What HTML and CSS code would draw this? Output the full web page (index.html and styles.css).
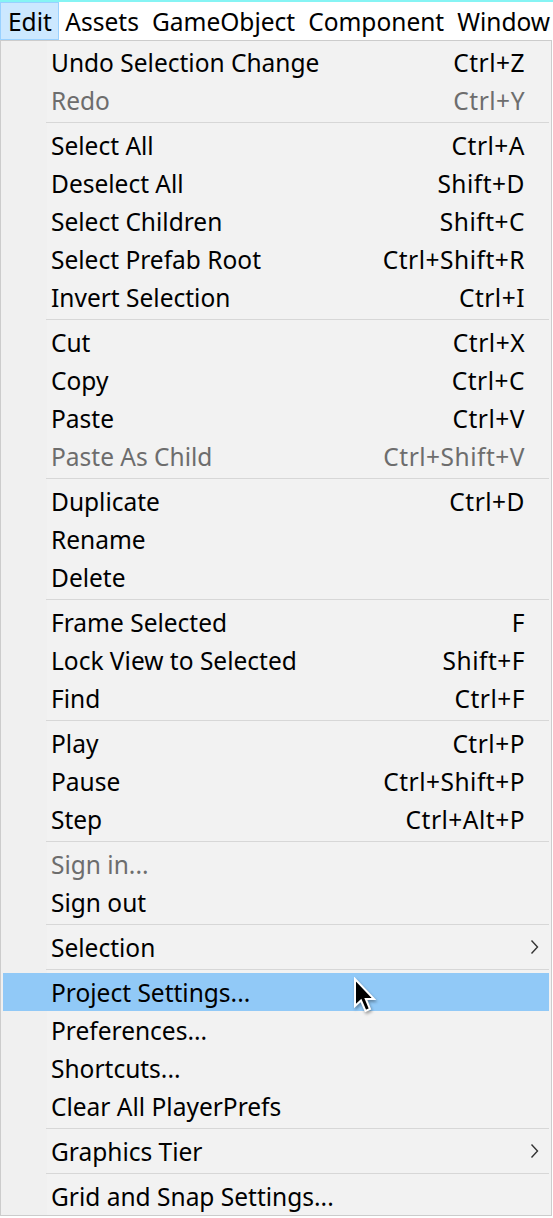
FILE: index.html
```html
<!DOCTYPE html>
<html>
<head>
<meta charset="utf-8">
<link rel="stylesheet" href="styles.css">
</head>
<body>
<div class="topline"></div>
<div class="menubar">
  <span class="mb-item mb-active">Edit</span>
  <span class="mb-item">Assets</span>
  <span class="mb-item">GameObject</span>
  <span class="mb-item">Component</span>
  <span class="mb-item">Window</span>
</div>
<div class="menu">
  <div class="row"><span class="label">Undo Selection Change</span><span class="key">Ctrl+Z</span><span class="arrow"></span></div>
  <div class="row disabled"><span class="label">Redo</span><span class="key">Ctrl+Y</span><span class="arrow"></span></div>
  <div class="sep"></div>
  <div class="row"><span class="label">Select All</span><span class="key">Ctrl+A</span><span class="arrow"></span></div>
  <div class="row"><span class="label">Deselect All</span><span class="key">Shift+D</span><span class="arrow"></span></div>
  <div class="row"><span class="label">Select Children</span><span class="key">Shift+C</span><span class="arrow"></span></div>
  <div class="row"><span class="label">Select Prefab Root</span><span class="key">Ctrl+Shift+R</span><span class="arrow"></span></div>
  <div class="row"><span class="label">Invert Selection</span><span class="key">Ctrl+I</span><span class="arrow"></span></div>
  <div class="sep"></div>
  <div class="row"><span class="label">Cut</span><span class="key">Ctrl+X</span><span class="arrow"></span></div>
  <div class="row"><span class="label">Copy</span><span class="key">Ctrl+C</span><span class="arrow"></span></div>
  <div class="row"><span class="label">Paste</span><span class="key">Ctrl+V</span><span class="arrow"></span></div>
  <div class="row disabled"><span class="label">Paste As Child</span><span class="key">Ctrl+Shift+V</span><span class="arrow"></span></div>
  <div class="sep"></div>
  <div class="row"><span class="label">Duplicate</span><span class="key">Ctrl+D</span><span class="arrow"></span></div>
  <div class="row"><span class="label">Rename</span><span class="key"></span><span class="arrow"></span></div>
  <div class="row"><span class="label">Delete</span><span class="key"></span><span class="arrow"></span></div>
  <div class="sep"></div>
  <div class="row"><span class="label">Frame Selected</span><span class="key">F</span><span class="arrow"></span></div>
  <div class="row"><span class="label">Lock View to Selected</span><span class="key">Shift+F</span><span class="arrow"></span></div>
  <div class="row"><span class="label">Find</span><span class="key">Ctrl+F</span><span class="arrow"></span></div>
  <div class="sep"></div>
  <div class="row"><span class="label">Play</span><span class="key">Ctrl+P</span><span class="arrow"></span></div>
  <div class="row"><span class="label">Pause</span><span class="key">Ctrl+Shift+P</span><span class="arrow"></span></div>
  <div class="row"><span class="label">Step</span><span class="key">Ctrl+Alt+P</span><span class="arrow"></span></div>
  <div class="sep"></div>
  <div class="row disabled"><span class="label">Sign in...</span><span class="key"></span><span class="arrow"></span></div>
  <div class="row"><span class="label">Sign out</span><span class="key"></span><span class="arrow"></span></div>
  <div class="sep"></div>
  <div class="row"><span class="label">Selection</span><span class="key"></span><span class="arrow"><svg width="9" height="16" viewBox="0 0 9 16"><path d="M1.5 1.5 L7.5 8 L1.5 14.5" fill="none" stroke="#333" stroke-width="1.4"/></svg></span></div>
  <div class="sep"></div>
  <div class="row hover"><span class="label">Project Settings...</span><span class="key"></span><span class="arrow"></span>
    <svg class="cursor" width="26" height="38" viewBox="0 0 26 38"><path d="M2 2 V29 L8 23.5 L12.5 34 L17 32 L12.8 22 H21 Z" fill="#000" stroke="#fff" stroke-width="2" stroke-linejoin="miter"/></svg>
  </div>
  <div class="row"><span class="label">Preferences...</span><span class="key"></span><span class="arrow"></span></div>
  <div class="row"><span class="label">Shortcuts...</span><span class="key"></span><span class="arrow"></span></div>
  <div class="row"><span class="label">Clear All PlayerPrefs</span><span class="key"></span><span class="arrow"></span></div>
  <div class="sep"></div>
  <div class="row"><span class="label">Graphics Tier</span><span class="key"></span><span class="arrow"><svg width="9" height="16" viewBox="0 0 9 16"><path d="M1.5 1.5 L7.5 8 L1.5 14.5" fill="none" stroke="#333" stroke-width="1.4"/></svg></span></div>
  <div class="sep"></div>
  <div class="row"><span class="label">Grid and Snap Settings...</span><span class="key"></span><span class="arrow"></span></div>
</div>
</body>
</html>
```

FILE: styles.css
```css
html, body {
  margin: 0;
  padding: 0;
  background: #ffffff;
}
body {
  width: 553px;
  height: 1218px;
  overflow: hidden;
  font-family: "Noto Sans", "Open Sans", sans-serif;
  font-size: 24.5px;
  color: #000;
}
.topline {
  height: 2px;
  background: #86f4f4;
}
.menubar {
  height: 38px;
  display: flex;
  align-items: stretch;
  white-space: nowrap;
}
.mb-item {
  display: flex;
  align-items: center;
  padding: 0 5.5px;
  border: 1px solid transparent;
  height: 36px;
}
.mb-active {
  padding: 0 6px 0 7px;
  background: #cce8ff;
  border-color: #99d1ff;
}
.menu {
  width: 552px;
  box-sizing: border-box;
  border: 1px solid #cccccc;
  padding: 2px 2px 0 2px;
  background: linear-gradient(to right, #f0f0f0 46px, #f2f2f2 46px);
}
.row {
  position: relative;
  height: 38px;
  display: grid;
  grid-template-columns: 1fr auto 24px;
  align-items: center;
  padding-left: 48px;
  white-space: nowrap;
}
.key {
  letter-spacing: 0.5px;
}
.row.disabled {
  color: #6d6d6d;
}
.row.hover {
  background: #91c9f7;
}
.arrow {
  display: flex;
  align-items: center;
  padding-left: 5px;
}
.sep {
  height: 7px;
  margin-left: 43px;
  display: flex;
  align-items: center;
}
.sep::after {
  content: "";
  flex: 1;
  height: 1px;
  background: #d7d7d7;
}
.cursor {
  position: absolute;
  left: 350px;
  top: 4px;
  filter: drop-shadow(1px 2px 1.5px rgba(0,0,0,0.35));
}
```
